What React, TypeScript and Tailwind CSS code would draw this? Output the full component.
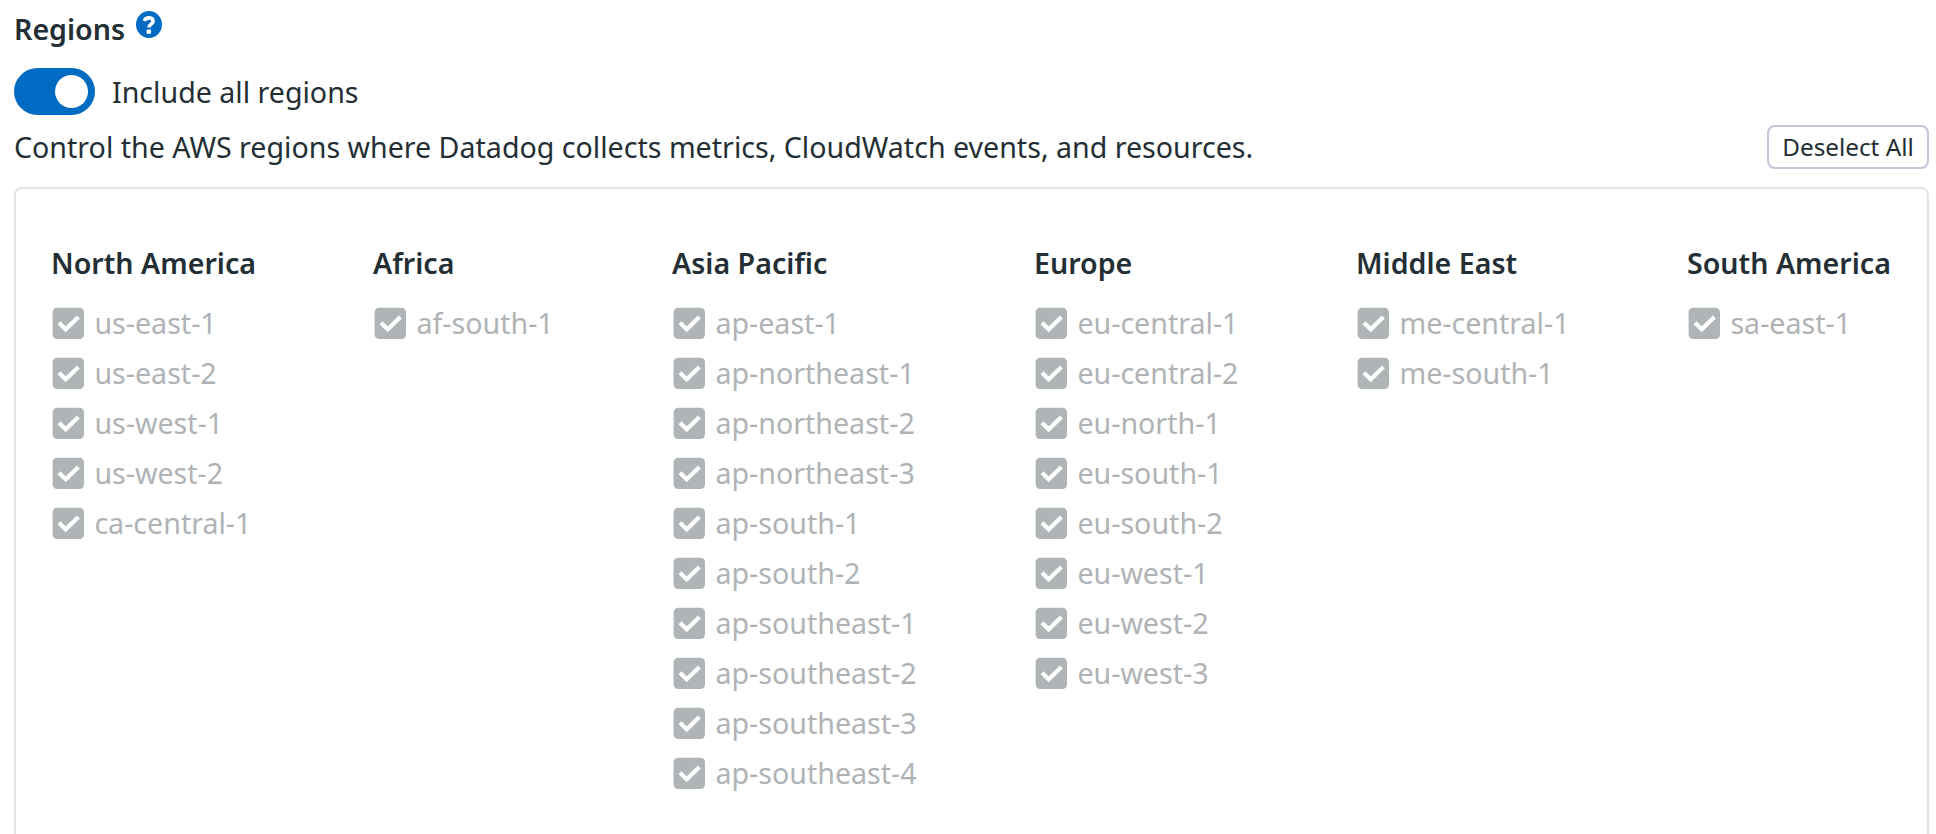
import React from "react";

const groups = [
  { name: "North America", w: "w-[322px]", items: ["us-east-1", "us-east-2", "us-west-1", "us-west-2", "ca-central-1"] },
  { name: "Africa", w: "w-[299px]", items: ["af-south-1"] },
  { name: "Asia Pacific", w: "w-[362px]", items: ["ap-east-1", "ap-northeast-1", "ap-northeast-2", "ap-northeast-3", "ap-south-1", "ap-south-2", "ap-southeast-1", "ap-southeast-2", "ap-southeast-3", "ap-southeast-4"] },
  { name: "Europe", w: "w-[322px]", items: ["eu-central-1", "eu-central-2", "eu-north-1", "eu-south-1", "eu-south-2", "eu-west-1", "eu-west-2", "eu-west-3"] },
  { name: "Middle East", w: "w-[331px]", items: ["me-central-1", "me-south-1"] },
  { name: "South America", w: "w-[210px]", items: ["sa-east-1"] },
];

function Check() {
  return (
    <svg className="shrink-0" width="32" height="32" viewBox="0 0 32 32" fill="none">
      <rect x="0.6" y="0.7" width="31.4" height="31.3" rx="4.5" fill="#afb4b6" />
      <path d="M7 15.7 L13.7 22.3 L26.4 9.9" stroke="white" strokeWidth="4.2" />
    </svg>
  );
}

export default function App() {
  return (
    <div className="h-[834px] w-[1936px] overflow-hidden bg-white pl-[14px] pr-[7px] font-['Noto_Sans',sans-serif] text-[28.6px] text-[#232f34]">
      <div className="flex h-[59px] items-center gap-[11px]">
        <h1 className="font-semibold">Regions</h1>
        <svg className="-mt-[10px]" width="26" height="27" viewBox="0 0 26 27">
          <ellipse cx="13" cy="13.5" rx="13" ry="13.5" fill="#006bc2" />
          <path d="M8.2 9.9 C10 5.7 17 5.9 17 10.2 C17 13.3 13 13 13 16.4" fill="none" stroke="white" strokeWidth="3.6" />
          <rect x="10.6" y="18.6" width="4.4" height="4.2" rx="1" fill="white" />
        </svg>
      </div>
      <div className="flex h-[65px] items-center gap-[17px]">
        <span className="flex h-[47px] w-[81px] items-center justify-end rounded-full bg-[#006bc2] pr-[7px]">
          <span className="h-[33px] w-[33px] rounded-full bg-white" />
        </span>
        <span className="mt-px">Include all regions</span>
      </div>
      <div className="flex h-[63px] items-start justify-between">
        <p className="mt-[1px] whitespace-nowrap leading-[44px]">Control the AWS regions where Datadog collects metrics, CloudWatch events, and resources.</p>
        <button className="mt-px h-11 w-[162px] rounded-lg border-2 border-[#c2c5d8] pt-px text-[24.3px] leading-none">Deselect All</button>
      </div>
      <div className="flex h-[700px] rounded-lg border-2 border-[#e1e4ea] pl-[35px] pt-[54px]">
        {groups.map((g) => (
          <section key={g.name} className={`${g.w} shrink-0 whitespace-nowrap`}>
            <h2 className="h-[55px] font-semibold leading-[40px]">{g.name}</h2>
            {g.items.map((i) => (
              <label key={i} className="flex h-[50px] items-center gap-[10px] pl-[1.4px] text-[#afb3b5]">
                <Check />
                <span>{i}</span>
              </label>
            ))}
          </section>
        ))}
      </div>
    </div>
  );
}
